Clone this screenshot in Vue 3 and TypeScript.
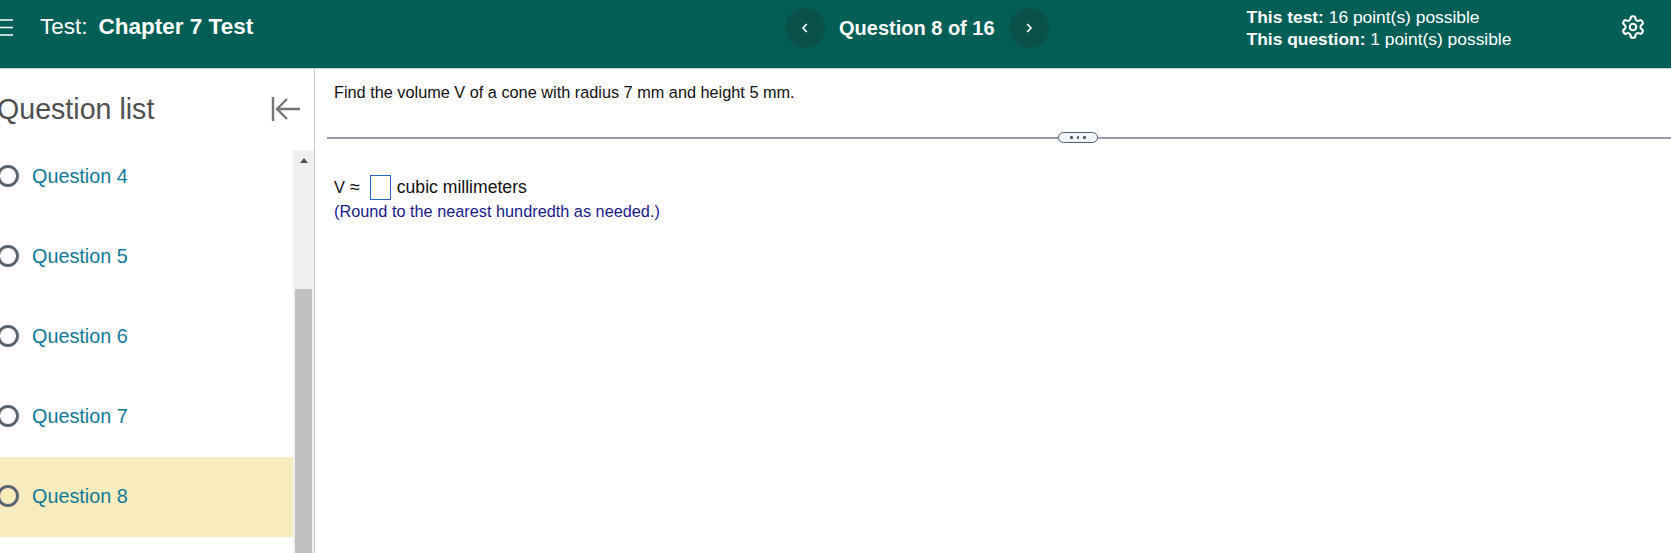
<script setup lang="ts">
const questions: number[] = [4, 5, 6, 7, 8, 9];
</script>

<template>
  <div class="page">
    <header class="top">
      <div class="left">
        <svg class="menu" width="16" height="17" viewBox="0 0 16 17"><path d="M0 1h16M0 8.500h16M0 16h16" stroke="#fff" stroke-width="1.700" /></svg>
        <span class="label">Test:</span>
        <strong class="name">Chapter 7 Test</strong>
      </div>
      <nav class="nav">
        <button class="round">
          <svg width="10" height="12" viewBox="0 0 10 12"><path d="M6.800 2 3 6l3.800 4" fill="none" stroke="#fff" stroke-width="1.700" /></svg>
        </button>
        <strong class="count">Question 8 of 16</strong>
        <button class="round">
          <svg width="10" height="12" viewBox="0 0 10 12"><path d="M3.200 2 7 6l-3.800 4" fill="none" stroke="#fff" stroke-width="1.700" /></svg>
        </button>
      </nav>
      <div class="points">
        <div><b>This test:</b> 16 point(s) possible</div>
        <div><b>This question:</b> 1 point(s) possible</div>
      </div>
      <svg class="gear" width="26" height="26" viewBox="0 0 24 24" fill="none" stroke="#fff" stroke-width="1.900" stroke-linejoin="round" stroke-linecap="round">
        <path d="M12.220 2h-.44a2 2 0 0 0-2 2v.18a2 2 0 0 1-1 1.730l-.43.25a2 2 0 0 1-2 0l-.15-.08a2 2 0 0 0-2.730.73l-.22.38a2 2 0 0 0 .73 2.730l.15.1a2 2 0 0 1 1 1.720v.51a2 2 0 0 1-1 1.740l-.15.09a2 2 0 0 0-.73 2.730l.22.38a2 2 0 0 0 2.730.73l.15-.08a2 2 0 0 1 2 0l.43.25a2 2 0 0 1 1 1.730V20a2 2 0 0 0 2 2h.44a2 2 0 0 0 2-2v-.18a2 2 0 0 1 1-1.730l.43-.25a2 2 0 0 1 2 0l.15.08a2 2 0 0 0 2.730-.73l.22-.39a2 2 0 0 0-.73-2.730l-.15-.08a2 2 0 0 1-1-1.740v-.5a2 2 0 0 1 1-1.740l.15-.09a2 2 0 0 0 .73-2.730l-.22-.38a2 2 0 0 0-2.730-.73l-.15.08a2 2 0 0 1-2 0l-.43-.25a2 2 0 0 1-1-1.730V4a2 2 0 0 0-2-2z" />
        <circle cx="12" cy="12" r="3" />
      </svg>
    </header>
    <div class="body">
      <aside class="side">
        <div class="side-head">
          <h2>Question list</h2>
          <svg class="collapse" width="30" height="26" viewBox="0 0 30 26" fill="none" stroke="#757575" stroke-width="2.400"><path d="M2 1v24M29 13H6M16 3 6 13l10 10" /></svg>
        </div>
        <div class="list-wrap">
          <ul class="list">
            <li v-for="q in questions" :key="q" :class="{ current: q === 8 }">
              <span class="dot"></span>
              <a>Question {{ q }}</a>
            </li>
          </ul>
          <div class="scroll">
            <span class="arrow"></span>
            <div class="track"></div>
            <div class="thumb"></div>
          </div>
        </div>
      </aside>
      <main class="main">
        <p class="prompt">Find the volume V of a cone with radius 7 mm and height 5 mm.</p>
        <div class="split"><span class="grip"><i></i><i></i><i></i></span></div>
        <div class="answer">
          <div class="line">V <span class="approx">≈</span><span class="box"></span><span class="unit">cubic millimeters</span></div>
          <div class="hint">(Round to the nearest hundredth as needed.)</div>
        </div>
      </main>
    </div>
  </div>
</template>

<style>
html, body { margin: 0; overflow: hidden; background: #fff; }
</style>

<style scoped>
.page { width: 1671px; height: 553px; overflow: hidden; display: flex; flex-direction: column; font-family: "Liberation Sans", Arial, sans-serif; }
.top { flex: 0 0 68px; background: #035f56; color: #fff; display: flex; align-items: flex-start; border-bottom: 1px solid #c9d2d3; }
.left { width: 785px; display: flex; align-items: center; height: 54px; flex: none; }
.menu { margin-left: -3px; flex: none; }
.label { margin-left: 27px; font-size: 22.500px; }
.name { margin-left: 11px; font-size: 22.500px; }
.nav { display: flex; align-items: center; height: 40px; margin-top: 8px; flex: none; }
.round { width: 40px; height: 40px; border: 0; padding: 0; border-radius: 50%; background: #0a514c; display: flex; align-items: center; justify-content: center; }
.count { font-size: 20px; margin: 0 14px; white-space: nowrap; }
.points { margin-left: 198px; margin-top: 6px; font-size: 17.400px; line-height: 22px; white-space: nowrap; flex: none; width: 373px; }
.gear { margin-top: 14px; flex: none; }
.body { flex: 1; display: flex; min-height: 0; }
.side { width: 314px; flex: none; border-right: 1px solid #c5cbdc; display: flex; flex-direction: column; }
.side-head { height: 81px; display: flex; align-items: center; justify-content: space-between; padding-right: 13px; flex: none; }
h2 { margin: 0 0 1px -3px; font-size: 28.600px; font-weight: 400; color: #505050; }
.collapse { margin-bottom: 1px; }
.list-wrap { flex: 1; display: flex; min-height: 0; overflow: hidden; }
.list { list-style: none; margin: -13px 0 0; padding: 0; flex: 1; min-width: 0; }
.list li { height: 80px; box-sizing: border-box; padding-bottom: 2px; display: flex; align-items: center; color: #117a99; font-size: 19.800px; }
.list li.current { background: #f8ebbd; }
.dot { width: 22px; height: 22px; box-sizing: border-box; border: 3px solid #5c6670; border-radius: 50%; margin-left: -3px; margin-right: 13px; flex: none; }
.scroll { width: 21px; flex: none; background: #f0f0f0; display: flex; flex-direction: column; align-items: center; }
.arrow { width: 0; height: 0; margin-top: 8px; border: 4.500px solid transparent; border-top: 0; border-bottom: 5px solid #505050; flex: none; }
.track { height: 126px; flex: none; }
.thumb { width: 17px; flex: 1; background: #c1c1c1; }
.main { flex: 1; min-width: 0; }
.prompt { margin: 14px 0 0 19px; font-size: 16.300px; line-height: 18px; color: #111; }
.split { margin: 36px 0 0 12px; height: 2px; background: #9c9cb0; position: relative; }
.grip { position: absolute; left: 731px; top: -5px; width: 38px; height: 9px; border: 1.500px solid #4f6070; border-radius: 7px; background: #f4f5f7; display: flex; align-items: center; justify-content: center; gap: 4px; }
.grip i { width: 2.500px; height: 2.500px; background: #4f5560; border-radius: 50%; }
.answer { margin: 35px 0 0 19px; }
.line { display: flex; align-items: center; font-size: 16.300px; height: 26px; color: #111; }
.approx { margin: 0 10px 0 5px; font-size: 18px; }
.box { width: 19px; height: 23px; border: 1px solid #2a66c8; margin-right: 6px; }
.unit { font-size: 17.600px; }
.hint { margin-top: 2px; font-size: 16.300px; line-height: 18px; color: #1a1a8c; }
</style>
